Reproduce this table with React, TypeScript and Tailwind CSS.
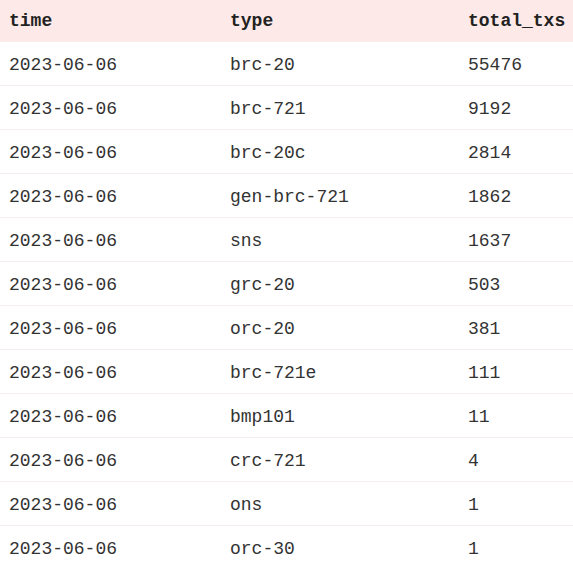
import React from "react";

const rows: [string, string, string][] = [
  ["2023-06-06", "brc-20", "55476"],
  ["2023-06-06", "brc-721", "9192"],
  ["2023-06-06", "brc-20c", "2814"],
  ["2023-06-06", "gen-brc-721", "1862"],
  ["2023-06-06", "sns", "1637"],
  ["2023-06-06", "grc-20", "503"],
  ["2023-06-06", "orc-20", "381"],
  ["2023-06-06", "brc-721e", "111"],
  ["2023-06-06", "bmp101", "11"],
  ["2023-06-06", "crc-721", "4"],
  ["2023-06-06", "ons", "1"],
  ["2023-06-06", "orc-30", "1"],
];

export default function App() {
  return (
    <div
      className="w-[573px] h-[562px] overflow-hidden bg-white text-[18px] text-[#333]"
      style={{ fontFamily: '"Liberation Mono", "DejaVu Sans Mono", monospace' }}
    >
      <div className="grid grid-cols-[221px_238px_1fr] h-[42px] items-center bg-[#fde9e7] font-bold text-[#222]">
        <div className="pl-[9px]">time</div>
        <div className="pl-[9px]">type</div>
        <div className="pl-[9px]">total_txs</div>
      </div>
      {rows.map((r, i) => (
        <div
          key={i}
          className="grid grid-cols-[221px_238px_1fr] h-[44px] items-center pt-[3px] border-b border-[#f6eeec]"
        >
          <div className="pl-[9px]">{r[0]}</div>
          <div className="pl-[9px]">{r[1]}</div>
          <div className="pl-[9px]">{r[2]}</div>
        </div>
      ))}
    </div>
  );
}
